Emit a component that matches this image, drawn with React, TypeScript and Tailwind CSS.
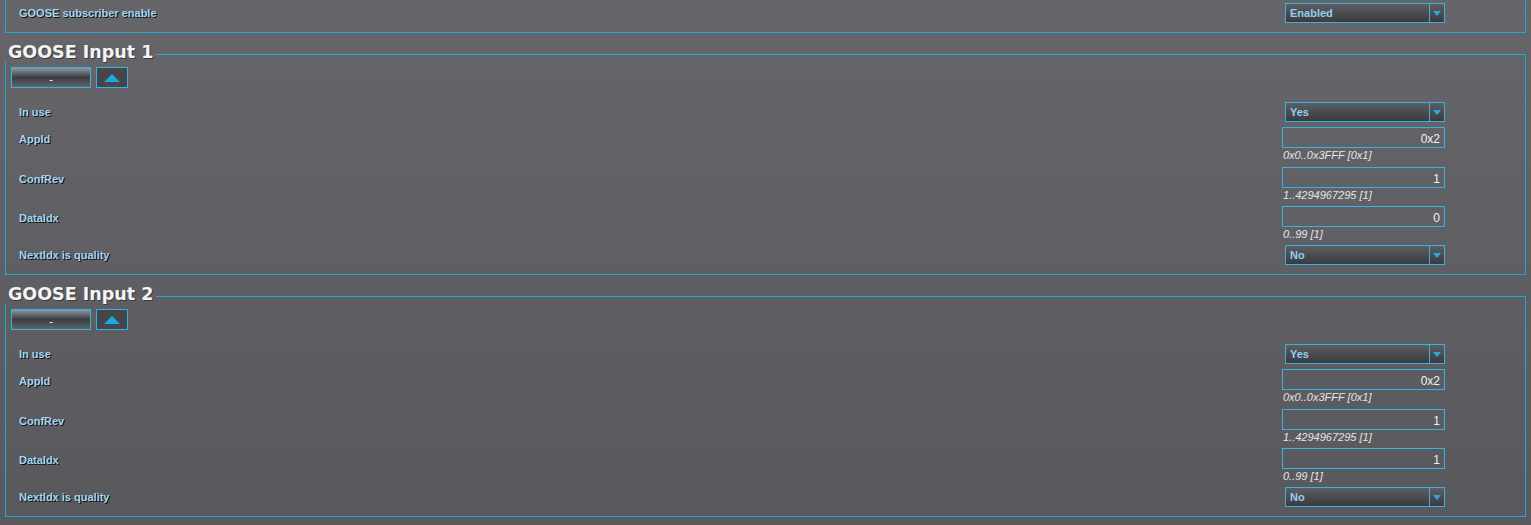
import React from "react";

const LBL =
  "flex-1 flex items-center pl-[13px] text-[11px] font-bold text-[#a3d6f2] [text-shadow:1px_1px_0_#111] font-['Liberation_Sans',Arial,sans-serif]";

function Select({ value }: { value: string }) {
  return (
    <div className="ml-[3px] w-[160px] h-[20px] flex border border-[#35b3e2] bg-linear-to-b from-[#5e5d62] to-[#3b3a3e]">
      <div className="flex-1 flex items-center pl-[4px] pt-[1px] text-[11px] font-bold text-[#8fd0f4] font-['Liberation_Sans',Arial,sans-serif]">
        {value}
      </div>
      <div className="w-[15px] border-l border-[#35b3e2] flex items-center justify-center">
        <svg width="8" height="5" viewBox="0 0 8 5">
          <polygon points="0,0 8,0 4,5" fill="#2aa9e2" />
        </svg>
      </div>
    </div>
  );
}

function SelectRow({ label, value }: { label: string; value: string }) {
  return (
    <div className="flex h-[20px]">
      <div className={LBL}>{label}</div>
      <div className="w-[163px] mr-[80px]">
        <Select value={value} />
      </div>
    </div>
  );
}

function InputRow({
  label,
  value,
  hint,
  hintCls,
}: {
  label: string;
  value: string;
  hint: string;
  hintCls: string;
}) {
  return (
    <div className="flex">
      <div className={LBL + " h-[21px] pt-[3px]"}>{label}</div>
      <div className="w-[163px] mr-[80px]">
        <div className="h-[21px] border border-[#35b3e2] flex items-center justify-end pr-[4px] pt-[2px] text-[12px] text-[#f2f2f2] font-['Liberation_Sans',Arial,sans-serif]">
          {value}
        </div>
        <div
          className={
            hintCls +
            " pl-[1px] leading-[14px] text-[11px] italic text-[#e6e6e6] font-['Liberation_Sans',Arial,sans-serif]"
          }
        >
          {hint}
        </div>
      </div>
    </div>
  );
}

function Section({ title, dataIdx }: { title: string; dataIdx: string }) {
  return (
    <div className="mx-[5px]">
      <div className="flex items-end h-[28px]">
        <div className="pl-[3px] leading-[18px] text-[17.5px] font-bold text-[#f4f4f4] [text-shadow:1px_1px_0_#3a3a3a] font-['DejaVu_Sans',Verdana,sans-serif]">
          {title}
        </div>
        <div className="flex-1 ml-[3px] h-[7px] border-t border-r border-[#22a6d8]" />
      </div>
      <div className="border-l border-r border-b border-[#22a6d8] pt-[6px] pb-[9px] pl-[5px]">
        <div className="flex gap-[5px]">
          <div className="w-[80px] h-[21px] border border-[#35b3e2] bg-linear-to-b from-[#8b979f] via-[#3b3e42] to-[#5f666c] flex items-center justify-center pt-[3px] text-[11px] text-white font-['Liberation_Sans',Arial,sans-serif]">
            -
          </div>
          <div className="w-[32px] h-[21px] border border-[#35b3e2] bg-[#464549] flex items-center justify-center">
            <svg width="16" height="8" viewBox="0 0 16 8">
              <polygon points="0,8 16,8 8,0" fill="#1fa6e3" />
            </svg>
          </div>
        </div>
        <div className="-ml-[5px] mt-[14px] flex flex-col">
          <SelectRow label="In use" value="Yes" />
          <div className="h-[5px]" />
          <InputRow label="AppId" value="0x2" hint="0x0..0x3FFF [0x1]" hintCls="h-[19px]" />
          <InputRow label="ConfRev" value="1" hint="1..4294967295 [1]" hintCls="h-[18px]" />
          <InputRow label="DataIdx" value={dataIdx} hint="0..99 [1]" hintCls="h-[18px]" />
          <SelectRow label="NextIdx is quality" value="No" />
        </div>
      </div>
    </div>
  );
}

export default function App() {
  return (
    <div className="w-[1531px] h-[525px] overflow-hidden bg-linear-to-b from-[#666569] to-[#59585c]">
      <div className="mx-[5px] border-l border-r border-b border-[#22a6d8] pt-[3px] pb-[9px]">
        <SelectRow label="GOOSE subscriber enable" value="Enabled" />
      </div>
      <Section title="GOOSE Input 1" dataIdx="0" />
      <Section title="GOOSE Input 2" dataIdx="1" />
    </div>
  );
}
